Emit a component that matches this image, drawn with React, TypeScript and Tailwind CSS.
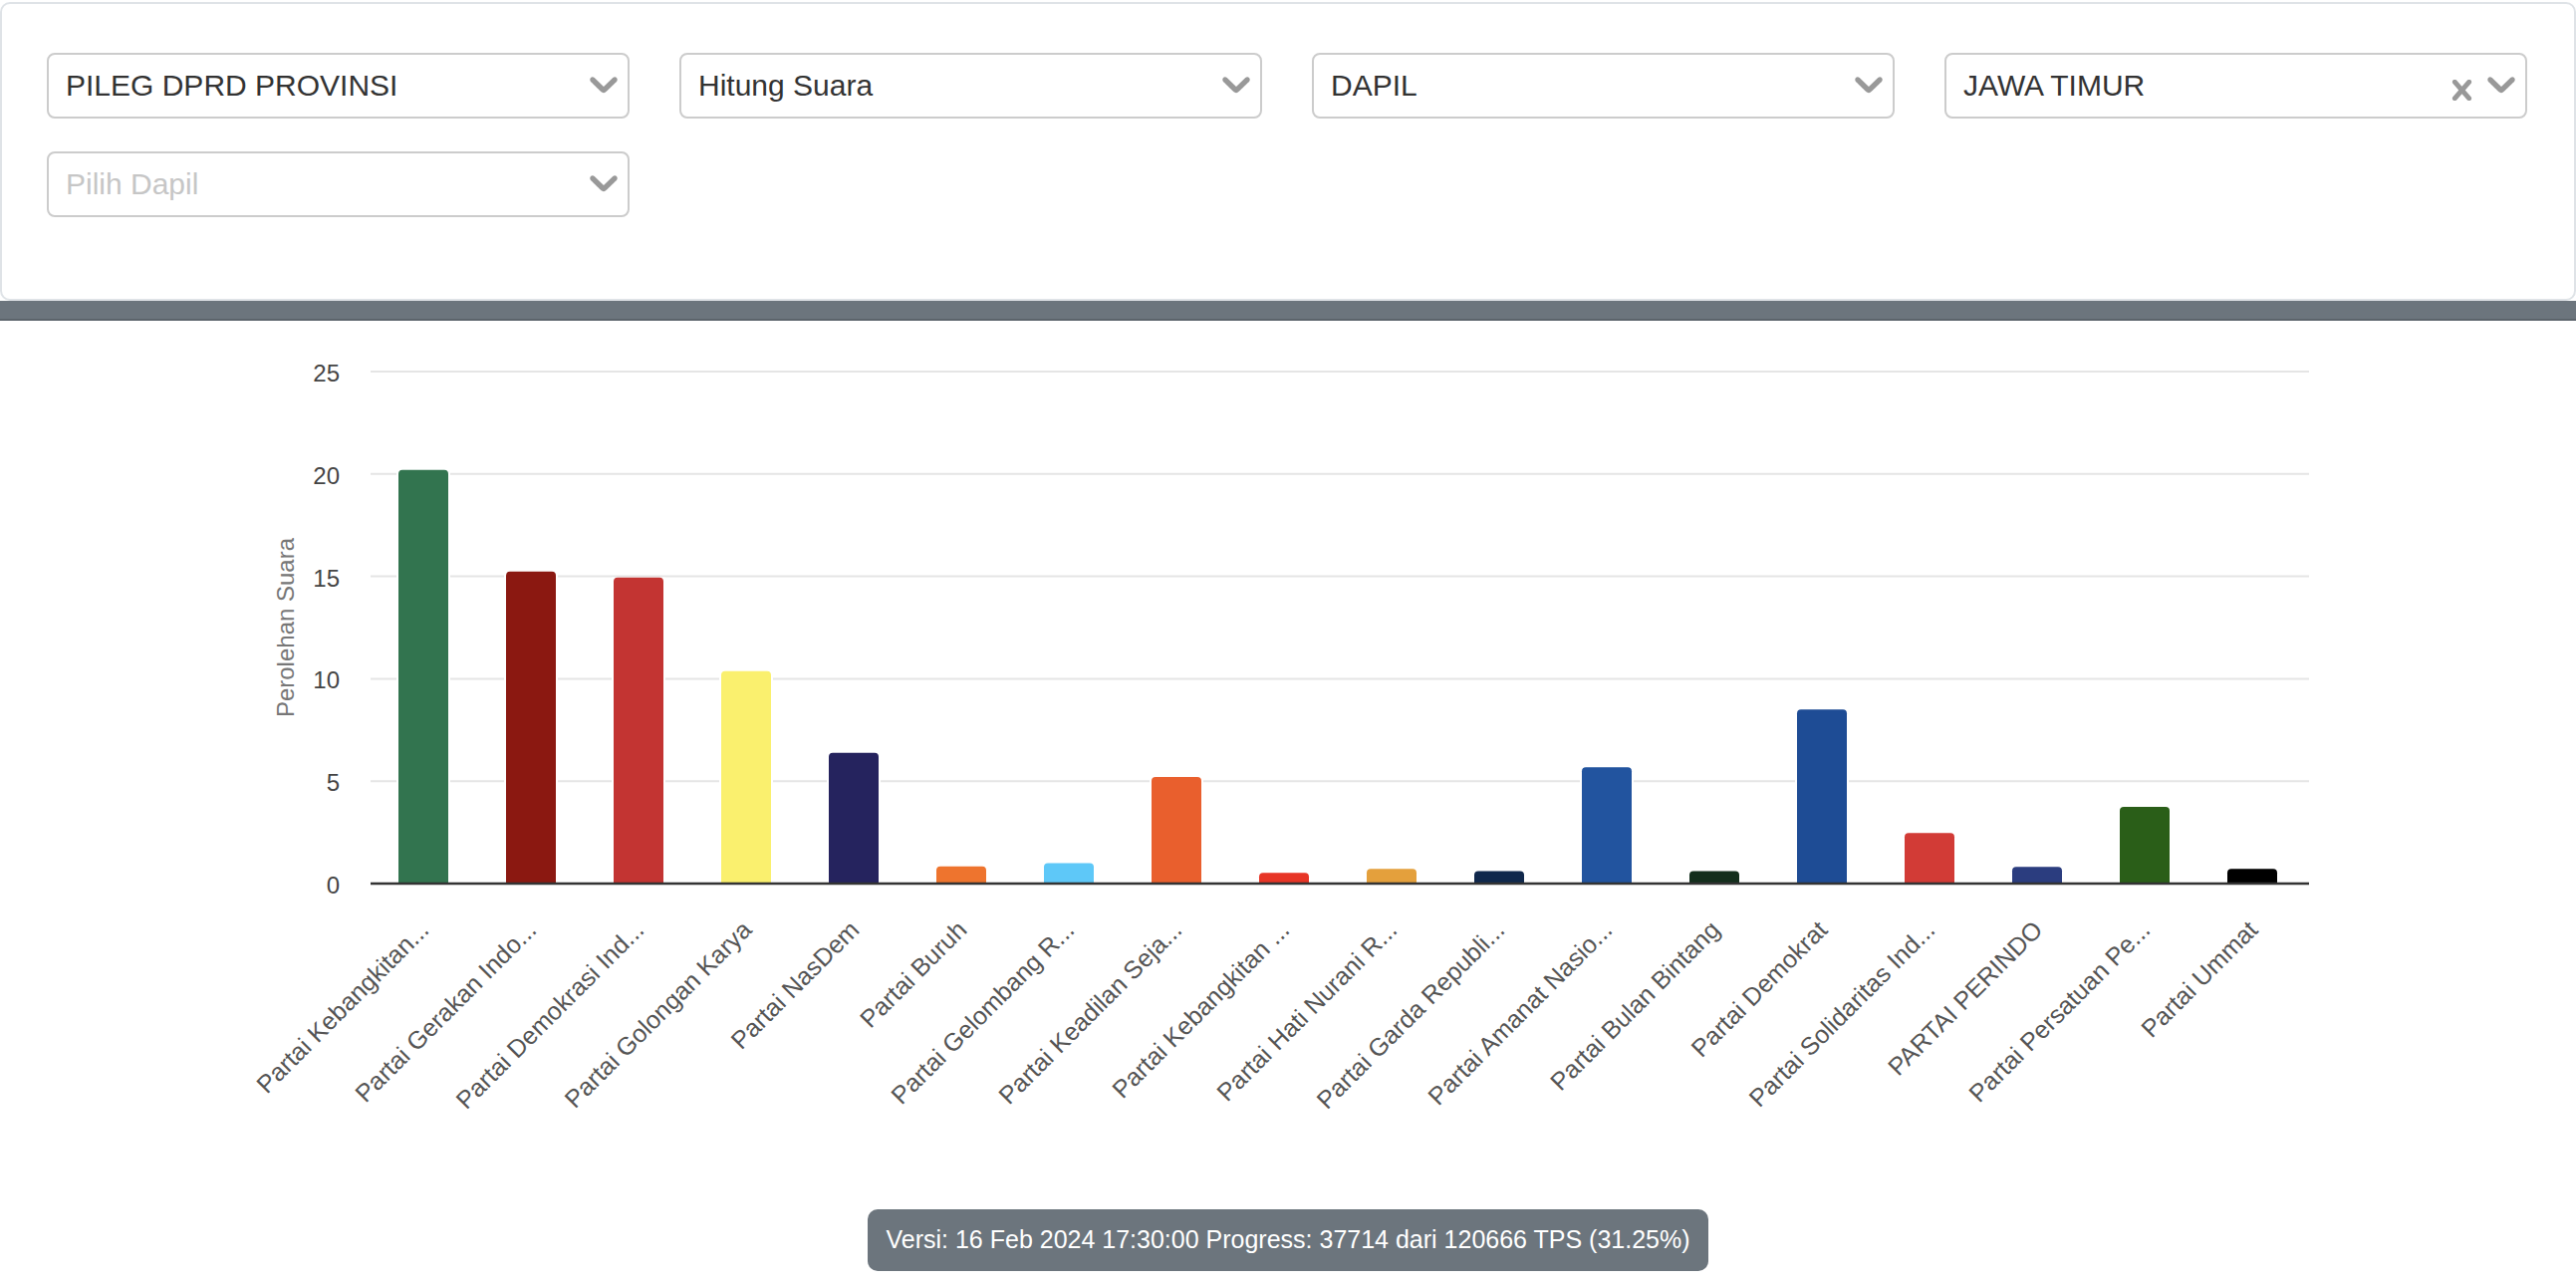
import React from "react";

const FONT = { fontFamily: '"Liberation Sans", Arial, Helvetica, sans-serif' };

// data yang sedang tampil di grafik (persentase perolehan suara)
const parties = [
  { name: "Partai Kebangkitan...", value: 20.2, color: "#32744f" },
  { name: "Partai Gerakan Indo...", value: 15.23, color: "#8b1811" },
  { name: "Partai Demokrasi Ind...", value: 14.95, color: "#c33432" },
  { name: "Partai Golongan Karya", value: 10.37, color: "#faf06e" },
  { name: "Partai NasDem", value: 6.38, color: "#25235e" },
  { name: "Partai Buruh", value: 0.84, color: "#ee742e" },
  { name: "Partai Gelombang R...", value: 1.0, color: "#5ec8f8" },
  { name: "Partai Keadilan Seja...", value: 5.2, color: "#e95f2d" },
  { name: "Partai Kebangkitan ...", value: 0.52, color: "#e73526" },
  { name: "Partai Hati Nurani R...", value: 0.72, color: "#e4a03c" },
  { name: "Partai Garda Republi...", value: 0.61, color: "#10284c" },
  { name: "Partai Amanat Nasio...", value: 5.68, color: "#22549f" },
  { name: "Partai Bulan Bintang", value: 0.61, color: "#132e1c" },
  { name: "Partai Demokrat", value: 8.5, color: "#1e4c95" },
  { name: "Partai Solidaritas Ind...", value: 2.47, color: "#d23b36" },
  { name: "PARTAI PERINDO", value: 0.82, color: "#2b3d7f" },
  { name: "Partai Persatuan Pe...", value: 3.74, color: "#2a5e18" },
  { name: "Partai Ummat", value: 0.72, color: "#000000" },
];

const filters = [
  { label: "PILEG DPRD PROVINSI" },
  { label: "Hitung Suara" },
  { label: "DAPIL" },
  { label: "JAWA TIMUR", clearable: true },
  { label: "Pilih Dapil", placeholder: true },
];

function Chevron() {
  return (
    <svg viewBox="4.2 7.1 11.6 7.6" width={28} height={18} fill="#999999">
      <path d="M4.516 7.548c0.436-0.446 1.043-0.481 1.576 0l3.908 3.747 3.908-3.747c0.533-0.481 1.141-0.446 1.574 0 0.436 0.445 0.408 1.197 0 1.615-0.406 0.418-4.695 4.502-4.695 4.502-0.217 0.223-0.502 0.335-0.787 0.335s-0.57-0.112-0.789-0.335c0 0-4.287-4.084-4.695-4.502s-0.436-1.17 0-1.615z" />
    </svg>
  );
}

function Cross() {
  return (
    <svg viewBox="5.2 4.9 9.6 10.2" width={21} height={21} fill="#999999">
      <path d="M14.348 14.849c-0.469 0.469-1.229 0.469-1.697 0l-2.651-3.030-2.651 3.029c-0.469 0.469-1.229 0.469-1.697 0-0.469-0.469-0.469-1.229 0-1.697l2.758-3.15-2.759-3.152c-0.469-0.469-0.469-1.228 0-1.697s1.228-0.469 1.697 0l2.652 3.031 2.651-3.031c0.469-0.469 1.228-0.469 1.697 0s0.469 1.229 0 1.697l-2.758 3.152 2.758 3.15c0.469 0.469 0.469 1.229 0 1.698z" />
    </svg>
  );
}

function SelectBox({ label, placeholder, clearable }: { label: string; placeholder?: boolean; clearable?: boolean }) {
  return (
    <div className="flex h-[66px] items-center rounded-[8px] border-2 border-[#cccccc] bg-white pl-[17px] pr-[10px]">
      <span className={`flex-1 whitespace-nowrap text-[30px] leading-[40px] ${placeholder ? "text-[#c6c6c6]" : "text-[#333333]"}`}>
        {label}
      </span>
      {clearable && (
        <span className="mr-[15px] mt-[8px] flex">
          <Cross />
        </span>
      )}
      <span className="flex">
        <Chevron />
      </span>
    </div>
  );
}

function BarChart() {
  const y0 = 565;
  const unit = 20.56;
  const left = 372;
  const right = 2318;
  const step = 108;
  const ticks = [0, 5, 10, 15, 20, 25];

  return (
    <svg viewBox="0 0 2586 880" className="block h-[880px] w-full" style={FONT}>
      {ticks.map((t) => {
        const y = y0 - t * unit;
        return (
          <g key={t}>
            {t > 0 && <line x1={left} x2={right} y1={y} y2={y} stroke="#e5e5e5" strokeWidth={2} />}
            <text x={341} y={y + 10} textAnchor="end" fontSize={24} fill="#444444">
              {t}
            </text>
          </g>
        );
      })}
      <text x={295} y={308} textAnchor="middle" fontSize={24} fill="#777777" transform="rotate(-90 295 308)">
        Perolehan Suara
      </text>
      {parties.map((p, i) => {
        const cx = 425 + i * step;
        const h = p.value * unit;
        const x = cx - 25;
        const top = y0 - h;
        const r = Math.min(4, h);
        const d = `M${x} ${y0} L${x} ${top + r} Q${x} ${top} ${x + r} ${top} L${x + 50 - r} ${top} Q${x + 50} ${top} ${x + 50} ${top + r} L${x + 50} ${y0} Z`;
        return (
          <g key={p.name}>
            <rect x={x - 2} y={top} width={54} height={h} fill="#ffffff" />
            <path d={d} fill={p.color} />
            <text
              x={cx + 7}
              y={613}
              textAnchor="end"
              fontSize={25}
              fill="#555555"
              transform={`rotate(-45 ${cx + 7} 613)`}
            >
              {p.name}
            </text>
          </g>
        );
      })}
      <line x1={left} x2={right} y1={y0} y2={y0} stroke="#333333" strokeWidth={2.5} />
    </svg>
  );
}

export default function App() {
  return (
    <div className="min-h-screen w-full bg-white" style={FONT}>
      <div className="mt-[2px] rounded-[10px] border-2 border-[#dfe3e7] bg-white pb-[82px] pl-[45px] pr-[47px] pt-[49px]">
        <div className="grid grid-cols-4 gap-x-[50px] gap-y-[33px]">
          {filters.map((f) => (
            <SelectBox key={f.label} label={f.label} placeholder={f.placeholder} clearable={f.clearable} />
          ))}
        </div>
      </div>
      <div className="h-[20px] border-b-2 border-[#5c646b] bg-[#6c757d]" />
      <BarChart />
      <div className="mt-[12px] flex justify-center">
        <div className="flex h-[62px] items-center rounded-[10px] bg-[#6c757d] px-[18px] text-[25px] text-white">
          Versi: 16 Feb 2024 17:30:00 Progress: 37714 dari 120666 TPS (31.25%)
        </div>
      </div>
    </div>
  );
}
